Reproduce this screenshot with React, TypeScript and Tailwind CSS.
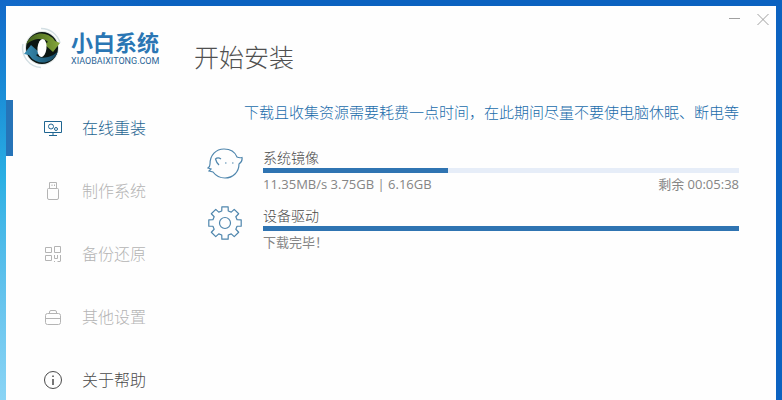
import React from 'react';

type NavItem = {
  label: string;
  icon: React.ReactNode;
  className: string;
  active?: boolean;
};

const navItems: NavItem[] = [
  {
    label: '在线重装',
    active: true,
    className: 'text-[#1f6591]',
    icon: (
      <>
        <path d="M1.5 3.5h17v11h-17z" />
        <circle cx="8" cy="8.5" r="2.5" />
        <circle cx="13" cy="11" r="1.5" />
        <path d="M10 14.5v3M6 17.5h8" />
      </>
    ),
  },
  {
    label: '制作系统',
    className: 'text-[#b4b4b4]',
    icon: (
      <>
        <path d="M6.5 7V1.5h7V7M9 3.5V5M11.5 3.5V5" />
        <path d="M5.5 7.5h9a1 1 0 0 1 1 1V17a1.5 1.5 0 0 1-1.5 1.5H6A1.5 1.5 0 0 1 4.5 17V8.5a1 1 0 0 1 1-1z" />
      </>
    ),
  },
  {
    label: '备份还原',
    className: 'text-[#b4b4b4]',
    icon: (
      <path d="M2.5 3.5h6v5h-6zM11.5 2.5h6v6h-6zM2.5 11.5h6v5h-6zM11.5 11v3.5h3V11M17.5 11v6M11.5 17v1M14.5 17.5h3" />
    ),
  },
  {
    label: '其他设置',
    className: 'text-[#b4b4b4]',
    icon: (
      <>
        <rect x="2.5" y="6.5" width="15" height="11" rx="2" />
        <path d="M6.5 6V5A1.5 1.5 0 0 1 8 3.5h4A1.5 1.5 0 0 1 13.5 5v1M2.5 11.5h15" />
      </>
    ),
  },
  {
    label: '关于帮助',
    className: 'text-[#4a4a4a]',
    icon: (
      <>
        <circle cx="10" cy="10" r="8.5" />
        <path d="M10 9v6M10 5.5V7" strokeWidth="1.5" />
      </>
    ),
  },
];

const Logo: React.FC = () => (
  <svg viewBox="0 0 42 42" className="size-[42px] shrink-0" aria-hidden="true">
    <defs>
      <linearGradient id="green" x1="0" y1="0" x2="1" y2="0">
        <stop offset="0" stopColor="#3d5c1a" />
        <stop offset="1" stopColor="#86a83a" />
      </linearGradient>
      <linearGradient id="teal" x1="0" y1="0" x2="1" y2="0">
        <stop offset="0" stopColor="#3a8fb5" />
        <stop offset="1" stopColor="#12435c" />
      </linearGradient>
    </defs>
    <path d="M20 1.5A19.5 19.5 0 0 1 39 16M20 40.5A19.500 19.500 0 0 1 2 17" fill="none" stroke="#d3dfe3" strokeWidth="1.5" />
    <circle cx="21" cy="21" r="17" fill="#dfe6e6" />
    <circle cx="21" cy="21" r="16" fill="#0b1512" />
    <path d="M5 18A16 16 0 0 1 34 14l5 2-7 9-9-8 4-2C24 11 12 10 5 18z" fill="url(#green)" />
    <path d="M37 24A16 16 0 0 1 8 28l-5-1 7-9 9 8-4 2C18 32 30 32 37 24z" fill="url(#teal)" />
    <ellipse cx="21" cy="21" rx="4.5" ry="9" fill="#fff" transform="rotate(6 21 21)" />
  </svg>
);

const Sidebar: React.FC = () => (
  <aside className="w-[188px] shrink-0">
    <div className="flex h-[94px] items-center gap-2 pb-[10px] pl-[15px]">
      <Logo />
      <div className="flex flex-col">
        <span className="font-['Liberation_Sans','Noto_Sans_CJK_SC',sans-serif] text-[22px] leading-[25px] font-bold text-[#2a76b4]">
          小白系统
        </span>
        <span className="font-[Roboto,sans-serif] text-[9px] leading-[10px] text-[#2a6496]">XIAOBAIXITONG.COM</span>
      </div>
    </div>
    <nav className="flex flex-col gap-[7px]">
      {navItems.map((item) => (
        <button
          key={item.label}
          type="button"
          className={`flex h-14 w-full items-center border-l-[7px] pl-[30px] text-base font-light ${item.className} ${item.active ? 'border-[#2674b8]' : 'border-transparent'}`}
        >
          <svg viewBox="0 0 20 20" className="mr-[19px] size-5" fill="none" stroke="currentColor" aria-hidden="true">
            {item.icon}
          </svg>
          {item.label}
        </button>
      ))}
    </nav>
  </aside>
);

const WhaleIcon = () => (
  <>
    <path d="M1 20c2-1 2-2 2-4C3 7 9 1 17 1c6 0 11 3 13 8 2 1 3 1 5 .5.5 3-.5 5-3 6.5C32 24 26 30 18 30c-5 0-9-2-12-6l-4-1 2-2z" />
    <path d="M14 11c-2-1.500-4-1.500-5.500 0 .5 2 1.500 4 3.500 6" />
    <path d="M18 15h1.5M25 15h1.5" />
  </>
);

// one tooth, repeated every 45 degrees around the centre
const gearPath = Array.from({ length: 8 }, (_, i) => {
  const points = [
    [-15, 12.5],
    [-11, 16.5],
    [11, 16.5],
    [15, 12.5],
  ];
  return points
    .map(([deg, r]) => {
      const a = ((i * 45 + deg) * Math.PI) / 180;
      return `${(18 + r * Math.sin(a)).toFixed(2)} ${(17 - r * Math.cos(a)).toFixed(2)}`;
    })
    .join('L');
}).join('L');

const GearIcon = () => (
  <>
    <path d={`M${gearPath}Z`} strokeLinejoin="round" />
    <circle cx="18" cy="17" r="5.5" />
  </>
);

type TaskProps = {
  title: string;
  percent: number;
  status: string;
  remaining?: string;
  icon: React.ReactNode;
};

const Task: React.FC<TaskProps> = ({ title, percent, status, remaining, icon }) => (
  <div className="flex h-[58px] gap-5">
    <svg viewBox="0 0 36 36" className="size-9 shrink-0" fill="none" stroke="#4f86ad" strokeWidth="1.2" aria-hidden="true">
      {icon}
    </svg>
    <div className="grow">
      <h2 className="text-sm leading-5 font-light text-[#484848]">{title}</h2>
      <div role="progressbar" aria-label={title} aria-valuenow={percent} className="h-[5px] bg-[#e6edf8]">
        <div className="h-full bg-[#2f74b2]" style={{ width: `${percent}%` }} />
      </div>
      <div className="mt-[2px] flex justify-between text-[13px] leading-[18px] text-[#858585]">
        <span>{status}</span>
        {remaining && <span>{remaining}</span>}
      </div>
    </div>
  </div>
);

const App: React.FC = () => {
  return (
    <div className="h-screen overflow-hidden bg-linear-to-b from-[#1268c8] via-[#2bb0e4] via-45% to-[#8ad4f5] font-['Open_Sans','Noto_Sans_CJK_SC',sans-serif]">
      <div className="h-full bg-linear-to-r from-transparent from-2% to-[#0b62c0] to-20% px-[6px] pt-[6px]">
        <div className="flex h-full bg-[#fefefe]">
          <Sidebar />
          <main className="min-w-0 grow pr-[37px]">
            <header className="flex h-[94px] justify-between">
              <h1 className="pt-[32px] text-[25px] leading-[38px] font-light text-[#505050]">开始安装</h1>
              <div className="-mr-[32px] flex h-6 gap-3 text-[#a0a0a0]">
                <button type="button" aria-label="最小化">
                  <svg viewBox="0 0 16 24" className="h-6 w-4" fill="none" stroke="currentColor">
                    <path d="M2 12.5h11" />
                  </svg>
                </button>
                <button type="button" aria-label="关闭">
                  <svg viewBox="0 0 16 24" className="h-6 w-4" fill="none" stroke="currentColor">
                    <path d="M2.5 8l11 11M13.5 8l-11 11" />
                  </svg>
                </button>
              </div>
            </header>
            <p className="text-right text-[15px] leading-6 font-light whitespace-nowrap text-[#1a6cab]">
              下载且收集资源需要耗费一点时间，在此期间尽量不要使电脑休眠、断电等
            </p>
            <div className="pt-6 pl-[13px]">
              <Task
                title="系统镜像"
                percent={38.8}
                status="11.35MB/s 3.75GB | 6.16GB"
                remaining="剩余 00:05:38"
                icon={<WhaleIcon />}
              />
              <Task title="设备驱动" percent={100} status="下载完毕！" icon={<GearIcon />} />
            </div>
          </main>
        </div>
      </div>
    </div>
  );
};

export default App;
